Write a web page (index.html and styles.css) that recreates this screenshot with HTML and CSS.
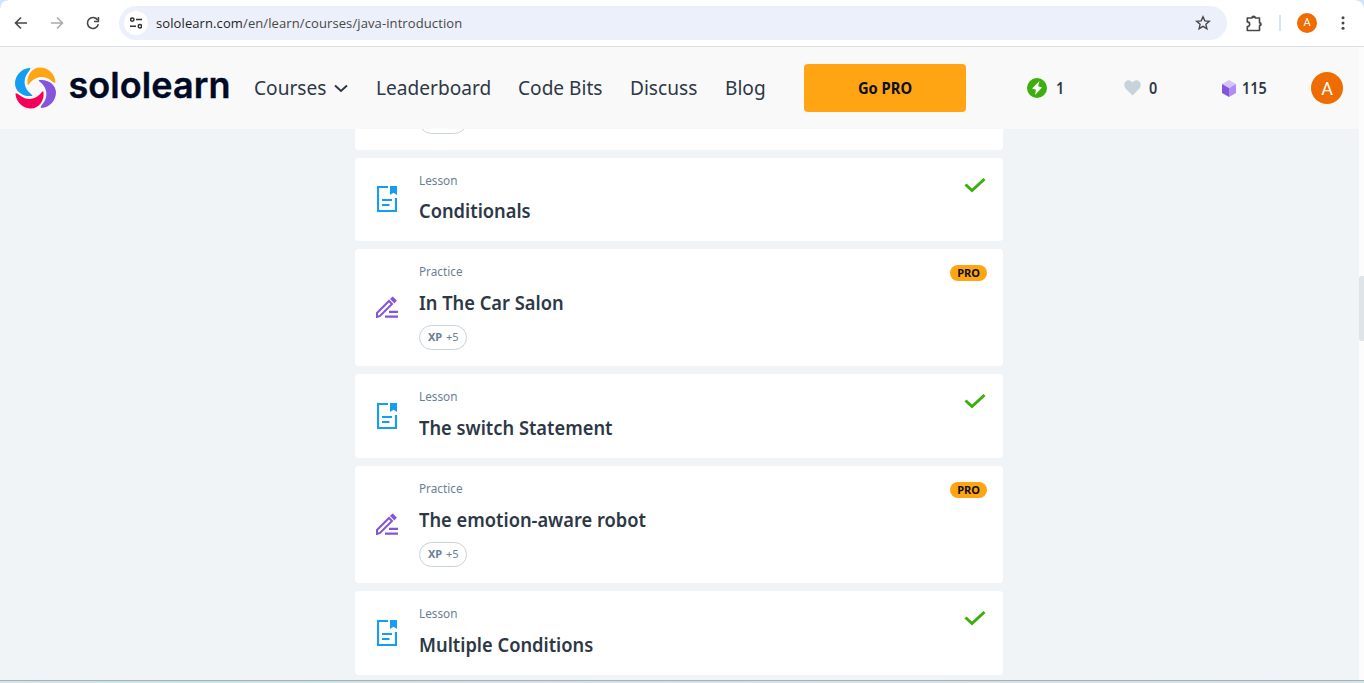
FILE: index.html
```
<!DOCTYPE html>
<html lang="en">
<head>
<meta charset="utf-8">
<title>Java Introduction</title>
<link rel="stylesheet" href="styles.css">
</head>
<body>
<svg width="0" height="0" class="defs">
  <symbol id="lesson" viewBox="0 0 20 26">
    <path d="M11 1H1v24h18V12" fill="none" stroke="#149ef2" stroke-width="2.200"/>
    <path d="M13 0h7v9l-3.500-2.200L13 9z" fill="#149ef2"/>
    <path d="M5 14h10M5 19h7.500" stroke="#149ef2" stroke-width="2"/>
  </symbol>
  <symbol id="practice" viewBox="0 0 22 22">
    <path d="M1 21v-4L13 5l3 3L4 20z" fill="none" stroke="#8454db" stroke-width="2"/>
    <path d="M14 3l2-2 .8-.6 4 4L18.500 7.500z" fill="#8454db"/>
    <path d="M13 15.800h9M9 20.600h13" stroke="#8454db" stroke-width="2.200"/>
  </symbol>
  <symbol id="check" viewBox="0 0 22 16"><path d="M1.500 7.500L8 13.500 20.500 2" fill="none" stroke="#3caf0e" stroke-width="3"/></symbol>
  <symbol id="blade" viewBox="0 0 41 40" overflow="visible"><path d="M14.500 0C6 .5 0 8 0 15.500 0 23.500 8 29 16.500 28c1.200-.2 1-.8 0-1.600C8.500 20.500 7.500 11 13.200 4.200c2-2.400 2.800-4.200 1.300-4.200z"/></symbol>
</svg>
<div class="browser">
  <svg class="back" width="14" height="14" viewBox="0 0 14 14"><path d="M13 7H2M7 1.500L1.500 7 7 12.500" fill="none" stroke="#474747" stroke-width="1.600"/></svg>
  <svg class="forward" width="14" height="14" viewBox="0 0 14 14"><path d="M1 7h11M7 1.500L12.500 7 7 12.500" fill="none" stroke="#ababab" stroke-width="1.600"/></svg>
  <svg class="reload" width="14" height="14" viewBox="0 0 14 14"><path d="M12.300 8.200A5.500 5.500 0 1 1 11.600 4" fill="none" stroke="#474747" stroke-width="1.600"/><path d="M12.400 1v4.500H8" fill="none" stroke="#474747" stroke-width="1.600"/></svg>
  <div class="address">
    <span class="tune"><svg width="12" height="12" viewBox="0 0 12 12" fill="none" stroke="#303134" stroke-width="1.500"><circle cx="2.300" cy="2.600" r="1.700"/><path d="M6 2.600h6M0 9.200h6"/><circle cx="9.900" cy="9.200" r="1.700"/></svg></span>
    <span class="url">sololearn.com<span class="path">/en/learn/courses/java-introduction</span></span>
    <svg class="star" width="16" height="16" viewBox="0 0 16 16"><path d="M8 1.800l1.800 4.100 4.500.4-3.400 3 1 4.400L8 11.400l-3.900 2.300 1-4.400-3.400-3 4.500-.4z" fill="none" stroke="#474747" stroke-width="1.400"/></svg>
  </div>
  <svg class="puzzle" width="17" height="17" viewBox="0 0 17 17"><path d="M1.300 3H6a1.600 1.600 0 0 1 3.200 0h4.300v4.700a1.500 1.500 0 0 1 0 3V15.500H1.300V11.600a2.300 2.300 0 0 0 0-4.700z" fill="none" stroke="#474747" stroke-width="1.600" stroke-linejoin="round"/><path d="M6 3a1.600 1.600 0 0 1 3.200 0zM13.500 7.500a1.700 1.700 0 0 1 0 3.400z" fill="#474747"/></svg>
  <span class="divider"></span>
  <span class="profile">A</span>
  <svg width="4" height="14" viewBox="0 0 4 14" fill="#474747"><circle cx="2" cy="1.700" r="1.500"/><circle cx="2" cy="7" r="1.500"/><circle cx="2" cy="12.300" r="1.500"/></svg>
</div>
<div class="viewport">
  <div class="page">
    <header>
      <svg class="logo" width="220" height="46" viewBox="0 0 220 46">
        <g transform="translate(0 3)">
          <use href="#blade" width="41" height="40" fill="#149ef2"/>
          <use href="#blade" width="41" height="40" fill="#ffa412" transform="rotate(90 20.500 20)"/>
          <use href="#blade" width="41" height="40" fill="#8454db" transform="rotate(180 20.500 20)"/>
          <use href="#blade" width="41" height="40" fill="#f40058" transform="rotate(270 20.500 20)"/>
        </g>
        <text class="wordmark" x="53.500" y="32.500" textLength="162">sololearn</text>
      </svg>
      <nav>
        <a class="courses">Courses</a>
        <svg class="chevron" width="14" height="9" viewBox="0 0 14 9"><path d="M1 1.500l6 5.500 6-5.500" fill="none" stroke="#2d3846" stroke-width="2"/></svg>
        <a class="leaderboard">Leaderboard</a>
        <a class="bits">Code Bits</a>
        <a class="discuss">Discuss</a>
        <a class="blog">Blog</a>
      </nav>
      <button class="go"><span>Go PRO</span></button>
      <div class="stat xp"><svg width="20" height="20" viewBox="0 0 20 20"><circle cx="10" cy="10" r="10" fill="#3caf0e"/><path d="M12.500 3L5 10.500l4 1.200L8 17l7-7.500-3.800-1.200z" fill="#fff"/></svg><span>1</span></div>
      <div class="stat hearts"><svg width="17" height="16" viewBox="0 0 17 16"><path d="M8.500 15.500L1.300 8.200C-1.500 4 2 0 5.300.4 7 .6 8 1.700 8.500 2.700 9 1.700 10 .6 11.700.4 15 0 18.500 4 15.700 8.200z" fill="#c8d2db"/></svg><span>0</span></div>
      <div class="stat bitsstat"><svg width="14" height="17" viewBox="0 0 14 17"><path d="M7 0l7 4-7 4-7-4z" fill="#d4c5f6"/><path d="M0 4l7 4v9l-7-4z" fill="#8454db"/><path d="M14 4L7 8v9l7-4z" fill="#b18cf4"/></svg><span>115</span></div>
      <span class="avatar">A</span>
    </header>
    <main>
      <section class="card partial"><span class="chip"></span></section>
      <section class="card lesson first"><svg class="icon"><use href="#lesson"/></svg><div class="body"><p class="kind">Lesson</p><h2>Conditionals</h2></div><svg class="check"><use href="#check"/></svg></section>
      <section class="card practice"><svg class="icon"><use href="#practice"/></svg><div class="body"><p class="kind">Practice</p><h2>In The Car Salon</h2><span class="chip"><b>XP</b> +5</span></div><span class="pro">PRO</span></section>
      <section class="card lesson"><svg class="icon"><use href="#lesson"/></svg><div class="body"><p class="kind">Lesson</p><h2>The switch Statement</h2></div><svg class="check"><use href="#check"/></svg></section>
      <section class="card practice"><svg class="icon"><use href="#practice"/></svg><div class="body"><p class="kind">Practice</p><h2>The emotion-aware robot</h2><span class="chip"><b>XP</b> +5</span></div><span class="pro">PRO</span></section>
      <section class="card lesson"><svg class="icon"><use href="#lesson"/></svg><div class="body"><p class="kind">Lesson</p><h2>Multiple Conditions</h2></div><svg class="check"><use href="#check"/></svg></section>
    </main>
  </div>
  <div class="scrollbar"><div class="thumb"></div></div>
</div>
<div class="edge"></div>
</body>
</html>
```

FILE: styles.css
```
* { box-sizing: border-box; }
body { margin: 0; width: 1364px; height: 683px; overflow: hidden; background: #fff; font-family: "Noto Sans", sans-serif; color: #2d3846; display: flex; flex-direction: column; }
svg { display: block; flex: none; }
.defs { position: absolute; }
.browser { height: 47px; flex: none; border-bottom: 1px solid #dcdfe2; display: flex; align-items: center; padding: 0 19px 0 14px; background: radial-gradient(circle at 8px 8px, #fff 7px, #d3e3fd 8px) 0 0 / 8px 8px no-repeat, radial-gradient(circle at 0 8px, #fff 7px, #d3e3fd 8px) 100% 0 / 8px 8px no-repeat; }
.forward { margin-left: 22px; }
.reload { margin-left: 22px; }
.address { width: 1108px; height: 34px; margin-left: 19px; border-radius: 17px; background: #ecf0fa; display: flex; align-items: center; padding: 0 16px 0 5px; }
.tune { width: 24px; height: 24px; border-radius: 50%; background: #fff; display: flex; align-items: center; justify-content: center; }
.url { margin-left: 8px; font: 13px "Open Sans", sans-serif; letter-spacing: .1px; color: #1f1f1f; }
.path { color: #474747; }
.star { margin-left: auto; }
.puzzle { margin-left: 19px; }
.divider { width: 2px; height: 16px; margin-left: 16px; background: #d3e3fd; }
.profile { width: 20px; height: 20px; margin: 0 auto 0 16px; border-radius: 50%; background: #ef6c00; color: #fff; font: 11px/20px Roboto, sans-serif; text-align: center; }
.viewport { height: 633px; flex: none; display: flex; }
.page { width: 1359px; background: #f0f4f7; }
header { height: 82px; background: #f9f9f9; display: flex; align-items: center; padding-left: 15px; }
.wordmark { font: 600 36px Inter, sans-serif; fill: #000a24; stroke: #000a24; stroke-width: .4px; stroke-linejoin: round; }
nav { display: flex; align-items: center; width: 550px; margin-left: 19px; font-size: 20px; line-height: 28px; white-space: nowrap; }
nav a { flex: none; transform: scaleX(.955); transform-origin: left; }
.courses { width: 80px; }
.leaderboard { width: 142px; margin-left: 28px; }
.bits { width: 112px; }
.discuss { width: 95px; }
.go { width: 162px; height: 48px; padding: 0; border: 0; border-radius: 4px; background: #ffa412; color: #0b1020; font: bold 16px "Noto Sans", sans-serif; }
.go span { display: block; transform: scaleX(.92); }
.stat { display: flex; align-items: center; font-size: 16px; font-weight: 600; }
.stat span { transform: scaleX(.9); transform-origin: left; }
.xp { width: 97px; margin-left: 61px; gap: 9px; }
.hearts { width: 98px; gap: 8px; }
.bitsstat { width: 89px; gap: 6px; }
.avatar { width: 32px; height: 32px; border-radius: 50%; background: #ef6c00; color: #fff; font: 18px/34px Roboto, sans-serif; text-align: center; }
main { height: 551px; overflow: hidden; padding-left: 355px; display: flex; flex-direction: column; gap: 8px; }
.card { width: 648px; flex: none; background: #fff; border-radius: 4px; display: flex; align-items: flex-start; padding: 15px 16px 0 22px; }
.partial { height: 21px; border-radius: 0 0 4px 4px; overflow: hidden; padding: 0 0 0 64px; }
.partial .chip { margin-top: -20px; flex: none; }
.lesson { height: 84px; }
.first { height: 83px; }
.practice { height: 117px; padding-left: 21px; }
.lesson .icon { width: 20px; height: 26px; margin-top: 14px; }
.first .icon { margin-top: 13px; }
.practice .icon { width: 22px; height: 22px; margin-top: 32px; }
.body { margin-left: 22px; }
.practice .body { margin-left: 21px; }
p, h2 { margin: 0; white-space: nowrap; }
.kind { font-size: 12px; line-height: 15px; color: #6b7f95; transform: scaleX(.98); transform-origin: left; }
h2 { font-size: 20px; line-height: 28px; font-weight: 600; margin-top: 10px; transform: scaleX(.914); transform-origin: left; }
.first h2 { margin-top: 9px; }
.chip { display: block; width: 48px; height: 25px; margin-top: 8px; padding-left: 8px; border: 1px solid #c8d2db; border-radius: 13px; font-size: 11px; line-height: 22px; color: #6b7f95; white-space: nowrap; word-spacing: 1px; }
.check { width: 22px; height: 16px; margin: 4px 1px 0 auto; }
.pro { width: 37px; height: 16px; margin: 1px 0 0 auto; border-radius: 8px; background: #ffa412; color: #0b1020; font: bold 11px/16px "Noto Sans", sans-serif; text-align: center; }
.scrollbar { width: 5px; padding-top: 229px; background: #fcfcfc; }
.thumb { width: 5px; height: 65px; border-radius: 3px 0 0 3px; background: #dfe4e8; }
.edge { height: 3px; flex: none; border-top: 1px solid #a4b1b6; background: linear-gradient(90deg, #d5e4e8, #cbe3e5 15%, #d9dfe9 50%, #d5e4e8); }
```
